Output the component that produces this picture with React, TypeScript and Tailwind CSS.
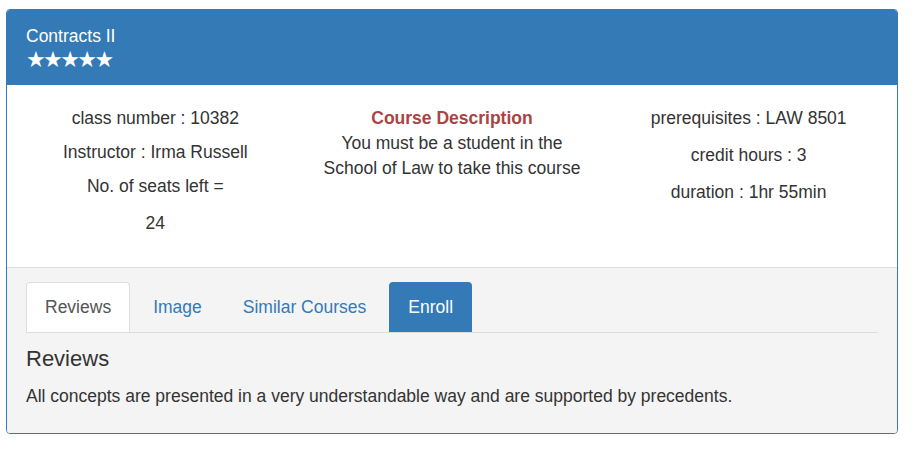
import React from 'react';

const tabs = ['Reviews', 'Image', 'Similar Courses'];

const App: React.FC = () => {
  return (
    <div className="min-h-screen bg-white pt-[9px] pl-[6px] text-[17.5px] text-[#333] font-['Liberation_Sans',Arial,sans-serif]">
      <div className="w-[892px] rounded-[4px] border border-[#337ab7] overflow-hidden">
        {/* heading */}
        <div className="bg-[#337ab7] text-white px-[19px] pt-[14px] pb-[15px]">
          <div className="leading-[25px]">Contracts II</div>
          <div className="leading-[21px] text-[22px] font-['DejaVu_Sans',sans-serif] tracking-[-2.6px]">★★★★★</div>
        </div>

        {/* body */}
        <div className="grid grid-cols-3 h-[182px] pt-[21px] text-center leading-[25px]">
          <div>
            <p>class number : 10382</p>
            <p className="mt-[9px]">Instructor : Irma Russell</p>
            <p className="mt-[9px]">No. of seats left =</p>
            <p className="mt-[12px]">24</p>
          </div>
          <div>
            <p className="font-bold text-[#a94442]">Course Description</p>
            <p className="px-[18px]">You must be a student in the School of Law to take this course</p>
          </div>
          <div>
            <p>prerequisites : LAW 8501</p>
            <p className="mt-[12px]">credit hours : 3</p>
            <p className="mt-[12px]">duration : 1hr 55min</p>
          </div>
        </div>

        {/* footer */}
        <div className="bg-[#f4f4f4] border-t border-[#ddd] px-[19px] pt-[14px] pb-[24px]">
          <div className="flex border-b border-[#ddd]">
            {tabs.map((t, i) => (
              <div
                key={t}
                className={
                  i === 0
                    ? 'h-[50px] px-[18px] mr-[5px] flex items-center rounded-t-[4px] border border-b-0 border-[#ddd] bg-white text-[#555] -mb-px'
                    : 'h-[50px] px-[18px] mr-[5px] flex items-center text-[#337ab7]'
                }
              >
                {t}
              </div>
            ))}
            <div className="h-[50px] px-[19px] flex items-center rounded-t-[4px] bg-[#337ab7] text-white -mb-px">Enroll</div>
          </div>
          <h3 className="text-[22px] leading-[26px] mt-[13px]">Reviews</h3>
          <p className="mt-[12px] leading-[25px]">
            All concepts are presented in a very understandable way and are supported by precedents.
          </p>
        </div>
      </div>
    </div>
  );
};

export default App;
